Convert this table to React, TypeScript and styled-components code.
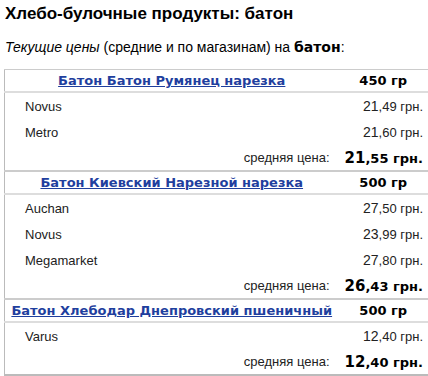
import React from "react";
import styled, { createGlobalStyle } from "styled-components";

const GlobalStyle = createGlobalStyle`
  body {
    margin: 0;
    background: #fff;
    font-family: "Liberation Sans", Arial, sans-serif;
    color: #000;
  }
`;

const Page = styled.div(() => ({
  padding: "4px 0 0 4px",
  width: "440px",
}));

const Title = styled.h1(() => ({
  fontSize: "17px",
  fontWeight: "bold",
  margin: "0 0 0 1px",
  lineHeight: "20px",
}));

const Intro = styled.p(() => ({
  fontSize: "14px",
  margin: "14px 0 13px 1px",
  lineHeight: "18px",
}));

const Product = styled.b(() => ({
  fontFamily: "'DejaVu Sans', Verdana, sans-serif",
  fontSize: "14px",
}));

const PriceTable = styled.table(() => ({
  borderCollapse: "collapse",
  tableLayout: "fixed",
  width: "424px",
  borderLeft: "1px solid #bbb",
  borderTop: "1px solid #ccc",
  borderBottom: "2px solid #bbb",
}));

const NameCol = styled.col(() => ({
  width: "334px",
}));

const HeadCell = styled.td<{ $first?: boolean }>(({ $first }) => ({
  height: "21px",
  padding: "0",
  textAlign: "center",
  fontFamily: "'DejaVu Sans', Verdana, sans-serif",
  fontWeight: "bold",
  fontSize: "13px",
  whiteSpace: "nowrap",
  borderBottom: "2px solid #ddd",
  borderTop: $first ? "none" : "2px solid #ccc",
}));

const ProductLink = styled.a(() => ({
  color: "#1f3f9e",
  textDecoration: "underline",
}));

const StoreCell = styled.td(() => ({
  height: "26px",
  padding: "0 0 0 20px",
  fontSize: "13px",
  color: "#222",
}));

const PriceCell = styled.td(() => ({
  padding: "0 5px 0 0",
  textAlign: "right",
  fontSize: "14px",
  color: "#222",
  whiteSpace: "nowrap",
}));

const Small = styled.span(() => ({
  fontSize: "13px",
}));

const AvgLabel = styled.td(() => ({
  height: "25px",
  padding: "0 9px 0 0",
  textAlign: "right",
  fontSize: "13px",
  color: "#222",
}));

const AvgValue = styled.td(() => ({
  padding: "0 5px 0 0",
  textAlign: "right",
  whiteSpace: "nowrap",
  fontFamily: "'DejaVu Sans', Verdana, sans-serif",
  fontWeight: "bold",
  fontSize: "15px",
}));

const AvgSmall = styled.span(() => ({
  fontSize: "13px",
}));

type Offer = { store: string; whole: string; frac: string };

type Item = {
  name: string;
  weight: string;
  offers: Offer[];
  avg: [string, string];
};

const items: Item[] = [
  {
    name: "Батон Батон Румянец нарезка",
    weight: "450 гр",
    offers: [
      { store: "Novus", whole: "21", frac: ",49 грн." },
      { store: "Metro", whole: "21", frac: ",60 грн." },
    ],
    avg: ["21", ",55 грн."],
  },
  {
    name: "Батон Киевский Нарезной нарезка",
    weight: "500 гр",
    offers: [
      { store: "Auchan", whole: "27", frac: ",50 грн." },
      { store: "Novus", whole: "23", frac: ",99 грн." },
      { store: "Megamarket", whole: "27", frac: ",80 грн." },
    ],
    avg: ["26", ",43 грн."],
  },
  {
    name: "Батон Хлебодар Днепровский пшеничный",
    weight: "500 гр",
    offers: [{ store: "Varus", whole: "12", frac: ",40 грн." }],
    avg: ["12", ",40 грн."],
  },
];

export default function App() {
  return (
    <Page>
      <GlobalStyle />
      <Title>Хлебо-булочные продукты: батон</Title>
      <Intro>
        <i>Текущие цены</i> (средние и по магазинам) на <Product>батон</Product>:
      </Intro>
      <PriceTable>
        <colgroup>
          <NameCol />
          <col />
        </colgroup>
        <tbody>
          {items.map((item, index) => (
            <React.Fragment key={index}>
              <tr>
                <HeadCell $first={index === 0}>
                  <ProductLink href="#">{item.name}</ProductLink>
                </HeadCell>
                <HeadCell $first={index === 0}>{item.weight}</HeadCell>
              </tr>
              {item.offers.map((offer, i) => (
                <tr key={i}>
                  <StoreCell>{offer.store}</StoreCell>
                  <PriceCell>
                    {offer.whole}
                    <Small>{offer.frac}</Small>
                  </PriceCell>
                </tr>
              ))}
              <tr>
                <AvgLabel>средняя цена:</AvgLabel>
                <AvgValue>
                  {item.avg[0]}
                  <AvgSmall>{item.avg[1]}</AvgSmall>
                </AvgValue>
              </tr>
            </React.Fragment>
          ))}
        </tbody>
      </PriceTable>
    </Page>
  );
}
